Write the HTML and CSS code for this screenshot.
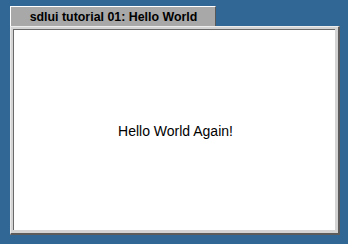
FILE: index.html
```html
<!DOCTYPE html>
<html>
<head>
<meta charset="utf-8">
<link rel="stylesheet" href="styles.css">
</head>
<body>
<div class="window">
  <div class="tab">sdlui tutorial 01: Hello World</div>
  <div class="frame">
    <div class="client">Hello World Again!</div>
  </div>
</div>
</body>
</html>
```
FILE: styles.css
```css
html, body {
  margin: 0;
  padding: 0;
  background: #316794;
  width: 348px;
  height: 244px;
  overflow: hidden;
}
.window {
  display: flex;
  flex-direction: column;
  align-items: flex-start;
  padding: 6px 0 0 10px;
}
.tab {
  box-sizing: border-box;
  width: 206px;
  height: 20px;
  background: #a8a8a8;
  border-top: 1px solid #ffffff;
  border-left: 1px solid #ffffff;
  border-right: 1px solid #585858;
  font-family: "Liberation Sans", Arial, sans-serif;
  font-weight: bold;
  font-size: 12.4px;
  color: #000;
  display: flex;
  align-items: center;
  justify-content: center;
  padding-top: 1px;
  padding-left: 1px;
}
.frame {
  box-sizing: border-box;
  width: 330px;
  height: 209px;
  background: #d4d4d4;
  border-top: 1px solid #ececec;
  border-left: 1px solid #ececec;
  border-right: 2px solid #5c5c5c;
  border-bottom: 2px solid #5c5c5c;
  padding: 2px 3px 3px 2px;
  display: flex;
}
.client {
  flex: 1;
  background: #ffffff;
  border-top: 1px solid #6a6a6a;
  border-left: 1px solid #6a6a6a;
  display: flex;
  align-items: center;
  justify-content: center;
  font-family: "Liberation Sans", Arial, sans-serif;
  font-size: 14px;
  color: #000;
  padding-top: 1px;
  padding-left: 2px;
}
```
